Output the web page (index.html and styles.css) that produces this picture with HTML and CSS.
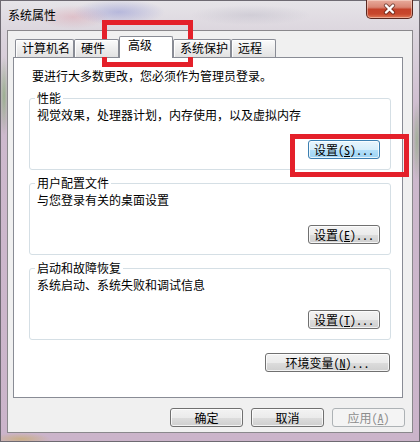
FILE: index.html
```html
<!DOCTYPE html>
<html lang="zh-CN">
<head>
<meta charset="utf-8">
<title>系统属性</title>
<link rel="stylesheet" href="styles.css">
</head>
<body>
<div class="window">
  <div class="titlebar">
    <span class="title">系统属性</span>
    <button class="close" aria-label="关闭">
      <svg width="15" height="12" viewBox="0 0 15 12">
        <path d="M4 2.5 L11 9.5 M11 2.5 L4 9.5" stroke="#3a1a14" stroke-opacity="0.55" stroke-width="4.2" stroke-linecap="round" fill="none"/>
        <path d="M4 2.5 L11 9.5 M11 2.5 L4 9.5" stroke="#ffffff" stroke-width="2.4" stroke-linecap="round" fill="none"/>
      </svg>
    </button>
  </div>
  <div class="client">
    <div class="tabs">
      <div class="tab w59">计算机名</div>
      <div class="tab w45">硬件</div>
      <div class="tab active">高级</div>
      <div class="tab w58">系统保护</div>
      <div class="tab w45">远程</div>
    </div>
    <div class="panel">
      <p class="note">要进行大多数更改，您必须作为管理员登录。</p>
      <fieldset class="group">
        <legend>性能</legend>
        <p class="desc">视觉效果，处理器计划，内存使用，以及虚拟内存</p>
        <div class="row"><button class="btn hot">设置(<u>S</u>)...</button></div>
      </fieldset>
      <fieldset class="group">
        <legend>用户配置文件</legend>
        <p class="desc">与您登录有关的桌面设置</p>
        <div class="row"><button class="btn">设置(<u>E</u>)...</button></div>
      </fieldset>
      <fieldset class="group">
        <legend>启动和故障恢复</legend>
        <p class="desc">系统启动、系统失败和调试信息</p>
        <div class="row"><button class="btn">设置(<u>T</u>)...</button></div>
      </fieldset>
      <div class="row env"><button class="btn wide">环境变量(<u>N</u>)...</button></div>
    </div>
    <div class="footer">
      <button class="btn">确定</button>
      <button class="btn">取消</button>
      <button class="btn" disabled>应用(<u>A</u>)</button>
    </div>
  </div>
</div>
<div class="mark mark-tab"></div>
<div class="mark mark-btn"></div>
</body>
</html>
```
FILE: styles.css
```css
* { box-sizing: border-box; }
html, body { margin: 0; padding: 0; }
body {
  position: relative;
  width: 420px;
  height: 442px;
  overflow: hidden;
  font-family: "Noto Sans CJK SC", "Noto Sans", sans-serif;
  font-size: 12px;
  color: #000;
  background: #fff;
}
.window {
  width: 420px;
  height: 442px;
  border: 1px solid #6e6a72;
  padding: 0 6px 8px 6px;
  display: flex;
  flex-direction: column;
  background:
    radial-gradient(ellipse 46px 13px at 118px 11px, rgba(110,120,205,0.38), rgba(110,120,205,0) 100%),
    radial-gradient(ellipse 36px 12px at 72px 16px, rgba(215,120,135,0.28), rgba(215,120,135,0) 100%),
    radial-gradient(ellipse 60px 10px at 250px 14px, rgba(150,150,170,0.22), rgba(150,150,170,0) 100%),
    radial-gradient(ellipse 5px 40px at 3px 95px, rgba(110,160,90,0.55), rgba(110,160,90,0) 100%),
    radial-gradient(ellipse 5px 40px at 416px 140px, rgba(110,160,90,0.45), rgba(110,160,90,0) 100%),
    radial-gradient(ellipse 30px 6px at 20px 438px, rgba(200,170,80,0.55), rgba(200,170,80,0) 100%),
    linear-gradient(to bottom, #e6e4e8 0, #dcd6de 30px, #cdb9cd 120px, #cbb4ca 100%);
}
.titlebar {
  height: 29px;
  display: flex;
  justify-content: space-between;
  align-items: flex-start;
  flex: none;
}
.title {
  margin: 7px 0 0 1px;
  line-height: 14px;
  font-size: 12px;
  color: #000;
}
.close {
  width: 47px;
  height: 19px;
  margin: -1px 0 0 0;
  padding: 0;
  border: 1px solid #5a2820;
  border-top: none;
  border-radius: 0 0 5px 5px;
  background: linear-gradient(to bottom, #e8ab9c 0%, #d98674 40%, #c4422a 52%, #c8472c 78%, #e07a58 100%);
  box-shadow: inset 0 0 0 1px rgba(255,235,225,0.45);
  display: flex;
  align-items: center;
  justify-content: center;
}
.close svg { display: block; }
.client {
  flex: 1;
  background: #f0f0f0;
  border: 1px solid #8a888c;
  display: flex;
  flex-direction: column;
}
.tabs {
  display: flex;
  align-items: flex-end;
  height: 26px;
  padding: 5px 0 0 7px;
  position: relative;
  z-index: 1;
  flex: none;
}
.tab {
  height: 18px;
  line-height: 16px;
  padding: 0 0 0 6px;
  border: 1px solid #898c95;
  border-bottom: none;
  border-radius: 2px 2px 0 0;
  background: linear-gradient(to bottom, #fbfbfb 0%, #eeeeee 50%, #e2e2e2 100%);
  box-shadow: inset 1px 1px 0 rgba(255,255,255,0.9);
  white-space: nowrap;
}
.w59 { width: 59px; }
.w58 { width: 58px; }
.w45 { width: 45px; }
.tab.active {
  width: 54px;
  height: 22px;
  margin-bottom: -1px;
  padding-left: 8px;
  background: #fff;
  box-shadow: none;
}
.panel {
  width: 390px;
  height: 341px;
  margin-left: 5px;
  background: #fff;
  border: 1px solid #898c95;
  padding: 11px 11px 0 15px;
  flex: none;
}
.note {
  margin: 0 0 0 3px;
  line-height: 14px;
}
.group {
  margin: 8px 0 0 0;
  padding: 0 10px 10px 7px;
  border: 1px solid #d5dfe5;
  border-radius: 3px;
  min-width: 0;
}
.group + .group { margin-top: 6px; }
.group legend {
  padding: 0 2px;
  margin-left: -2px;
  line-height: 14px;
}
.desc {
  margin: 3px 0 0 0;
  line-height: 14px;
}
.row {
  display: flex;
  justify-content: flex-end;
  margin-top: 18px;
}
.row.env { margin-top: 13px; }
.btn {
  width: 72px;
  height: 19px;
  padding: 0;
  font-family: "Noto Sans Mono CJK SC", "Noto Sans CJK SC", "Noto Sans", sans-serif;
  font-size: 12px;
  line-height: 16px;
  color: #000;
  border: 1px solid #707070;
  border-radius: 3px;
  background: linear-gradient(to bottom, #f3f3f3 0%, #ebebeb 50%, #dddddd 51%, #cfcfcf 100%);
  box-shadow: inset 0 0 0 1px rgba(255,255,255,0.75);
  white-space: nowrap;
}
.btn u { text-decoration: underline; text-underline-offset: 1px; }
.btn.hot {
  border-color: #3c7fb1;
  background: linear-gradient(to bottom, #e8f5fd 0%, #d6eefb 50%, #b4e0fa 51%, #9dd3f3 100%);
}
.btn.wide { width: 125px; margin-right: 1px; }
.btn:disabled {
  color: #8d8d8d;
  border-color: #adb2b5;
  background: #f4f4f4;
  box-shadow: none;
}
.footer {
  display: flex;
  justify-content: flex-end;
  gap: 8px;
  margin-top: 10px;
  padding-right: 7px;
}
.footer .btn { width: 73px; }
.mark {
  position: absolute;
  border: 5px solid #e4202a;
}
.mark-tab { left: 102px; top: 20px; width: 91px; height: 47px; }
.mark-btn { left: 290px; top: 134px; width: 119px; height: 43px; }
```
